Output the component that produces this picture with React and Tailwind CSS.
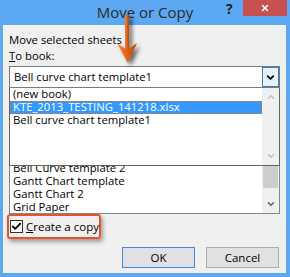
import { Check, ChevronDown, ChevronUp, X } from 'lucide-react';

const font = { fontFamily: '"Open Sans", "Noto Sans", sans-serif' };

function Row({ children, selected }) {
    return (
        <div
            className={`h-[13px] leading-[12px] pl-[3px] whitespace-nowrap ${selected
                ? 'bg-[#3399ff] text-white outline-1 outline-dotted outline-[#e07020] -outline-offset-1'
                : 'text-black'
                }`}
        >
            {children}
        </div>
    );
}

function Arrow() {
    return (
        <svg className="absolute left-[110px] top-[10px]" width="40" height="64" viewBox="0 0 40 64">
            <defs>
                <linearGradient id="ar" x1="0" x2="1" y1="0" y2="0">
                    <stop offset="0" stopColor="#f48a3c" />
                    <stop offset="0.5" stopColor="#e2601a" />
                    <stop offset="1" stopColor="#b8460a" />
                </linearGradient>
                <filter id="sh" x="-50%" y="-20%" width="200%" height="150%">
                    <feGaussianBlur in="SourceAlpha" stdDeviation="2" />
                    <feOffset dx="3" dy="3" result="b" />
                    <feComponentTransfer><feFuncA type="linear" slope="0.6" /></feComponentTransfer>
                    <feMerge><feMergeNode /><feMergeNode in="SourceGraphic" /></feMerge>
                </filter>
            </defs>
            <g filter="url(#sh)">
                <rect x="15" y="5" width="4" height="36" fill="url(#ar)" />
                <polygon points="7,33 17,40 27,33 18,53" fill="url(#ar)" />
            </g>
        </svg>
    );
}

export default function App() {
    return (
        <div className="w-[290px] h-[277px] bg-[#5ca8f2] flex flex-col relative overflow-hidden text-[11.3px]" style={font}>
            <div className="h-[25px] flex items-start justify-end relative shrink-0">
                <div className="absolute inset-x-0 top-0 text-center text-[15px] leading-[25px] text-[#2b2b2b]">Move or Copy</div>
                <div className="w-[16px] text-[14px] leading-[17px] font-bold text-[#222] relative">?</div>
                <div className="w-[44px] h-[16px] ml-[1px] mr-[3px] bg-[#c75050] flex items-center justify-center relative">
                    <X className="w-[10px] h-[10px] text-white" strokeWidth={3.5} />
                </div>
            </div>

            <div className="flex-1 ml-[3px] mr-[4px] mb-[4px] bg-[#f0f0f0] px-[6px] pt-[7px] text-black">
                <div className="leading-[16px]">Move selected sheets</div>
                <div className="leading-[16px]"><span className="underline">T</span>o book:</div>

                <div className="mt-[2px] h-[22px] border border-[#7a7a7a] bg-white flex items-center">
                    <div className="flex-1 pl-[4px] leading-[20px]">Bell curve chart template1</div>
                    <div className="w-[17px] h-[20px] bg-[#e5f1fb] border border-[#3c7fb1] flex items-center justify-center">
                        <ChevronDown className="w-[11px] h-[11px] text-black" strokeWidth={4} />
                    </div>
                </div>

                <div className="h-[78px] border border-[#646464] border-t-0 bg-white flex">
                    <div className="flex-1">
                        <Row>(new book)</Row>
                        <Row selected>KTE_2013_TESTING_141218.xlsx</Row>
                        <Row>Bell curve chart template1</Row>
                    </div>
                    <div className="w-[17px] bg-[#f0f0f0] flex flex-col items-center justify-between py-[4px]">
                        <ChevronUp className="w-[10px] h-[10px] text-[#c0c0c0]" strokeWidth={3.5} />
                        <ChevronDown className="w-[10px] h-[10px] text-[#c0c0c0]" strokeWidth={3.5} />
                    </div>
                </div>

                <div className="h-[48px] border border-t-0 border-[#828790] bg-white flex overflow-hidden">
                    <div className="flex-1 overflow-hidden">
                        <div className="-mt-[4px]">
                            <Row>Bell Curve template 2</Row>
                            <Row>Gantt Chart template</Row>
                            <Row>Gantt Chart 2</Row>
                            <Row>Grid Paper</Row>
                        </div>
                    </div>
                    <div className="w-[17px] bg-[#f0f0f0] flex flex-col">
                        <div className="mx-[1px] h-[22px] bg-[#cdcdcd]" />
                        <div className="flex-1 flex items-end justify-center pb-[4px]">
                            <ChevronDown className="w-[10px] h-[10px] text-[#606060]" strokeWidth={3.5} />
                        </div>
                    </div>
                </div>

                <div className="-ml-[2px] w-[94px] h-[25px] border-2 border-[#e8532c] rounded-[3px] shadow-[2px_3px_4px_rgba(0,0,0,0.35)] flex items-center pl-[1px] gap-[3px]">
                    <div className="w-[13px] h-[13px] border border-[#333] bg-white flex items-center justify-center">
                        <Check className="w-[11px] h-[11px] text-black" strokeWidth={4} />
                    </div>
                    <span className="whitespace-nowrap text-[11.5px]"><span className="underline">C</span>reate a copy</span>
                </div>

                <div className="flex justify-end gap-[11px] mt-[8px] pr-[1px]">
                    <button className="w-[73px] h-[21px] bg-[#e1e1e1] border border-[#3c8ce6] leading-[19px] text-[11.5px]">OK</button>
                    <button className="w-[73px] h-[21px] bg-[#e1e1e1] border border-[#adadad] leading-[19px] text-[11.5px]">Cancel</button>
                </div>
            </div>

            <Arrow />
        </div>
    );
}
